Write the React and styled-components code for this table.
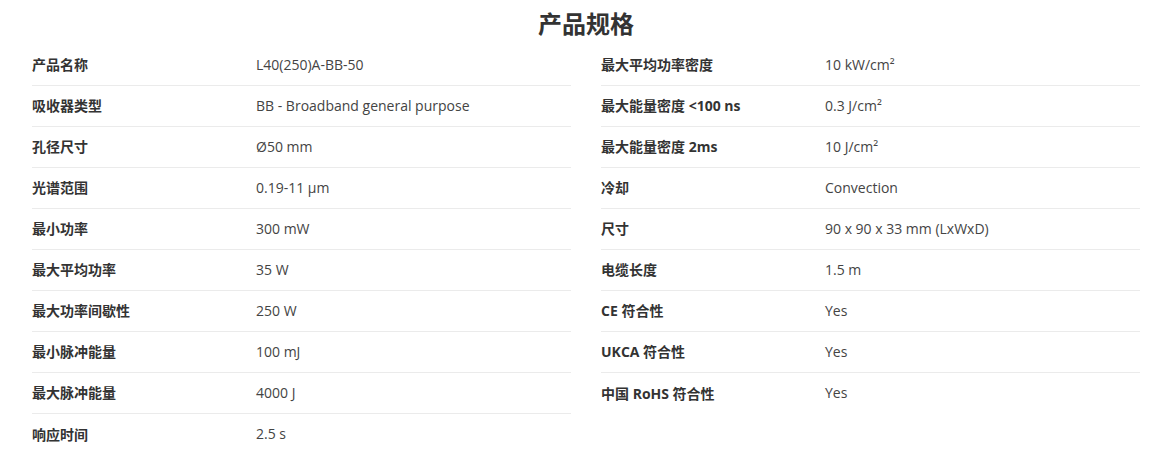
import styled, { createGlobalStyle } from 'styled-components'

const GlobalStyle = createGlobalStyle`
  body {
    margin: 0;
    background: #fff;
    font-family: 'Open Sans', 'Noto Sans CJK SC', sans-serif;
    color: #333;
  }
`

const Wrapper = styled.section`
  padding: 0 21px 0 32px;
`

const Title = styled.h2`
  margin: 0;
  box-sizing: border-box;
  height: 45px;
  padding-top: 5px;
  line-height: 37px;
  font-size: 24px;
  font-weight: 700;
  text-align: center;
  color: #333;
`

const Columns = styled.div`
  display: grid;
  grid-template-columns: 539px 539px;
  column-gap: 30px;
  align-items: start;
`

const List = styled.div`
  display: flex;
  flex-direction: column;
`

const Row = styled.div`
  display: grid;
  grid-template-columns: 224px 1fr;
  box-sizing: border-box;
  height: 41px;
  padding-bottom: 2px;
  align-items: center;
  border-bottom: 1px solid #ebebeb;
  font-size: 14px;
  &:last-child {
    border-bottom: none;
  }
`

const Label = styled.span`
  font-weight: 700;
  color: #333;
`

const Value = styled.span`
  color: #444;
`

const left = [
  ['产品名称', 'L40(250)A-BB-50'],
  ['吸收器类型', 'BB - Broadband general purpose'],
  ['孔径尺寸', 'Ø50 mm'],
  ['光谱范围', '0.19-11 µm'],
  ['最小功率', '300 mW'],
  ['最大平均功率', '35 W'],
  ['最大功率间歇性', '250 W'],
  ['最小脉冲能量', '100 mJ'],
  ['最大脉冲能量', '4000 J'],
  ['响应时间', '2.5 s'],
]

const right = [
  ['最大平均功率密度', '10 kW/cm²'],
  ['最大能量密度 <100 ns', '0.3 J/cm²'],
  ['最大能量密度 2ms', '10 J/cm²'],
  ['冷却', 'Convection'],
  ['尺寸', '90 x 90 x 33 mm (LxWxD)'],
  ['电缆长度', '1.5 m'],
  ['CE 符合性', 'Yes'],
  ['UKCA 符合性', 'Yes'],
  ['中国 RoHS 符合性', 'Yes'],
]

function SpecList({ items }) {
  return (
    <List>
      {items.map(([k, v]) => (
        <Row key={k}>
          <Label>{k}</Label>
          <Value>{v}</Value>
        </Row>
      ))}
    </List>
  )
}

export default function App() {
  return (
    <>
      <GlobalStyle />
      <Wrapper>
        <Title>产品规格</Title>
        <Columns>
          <SpecList items={left} />
          <SpecList items={right} />
        </Columns>
      </Wrapper>
    </>
  )
}
